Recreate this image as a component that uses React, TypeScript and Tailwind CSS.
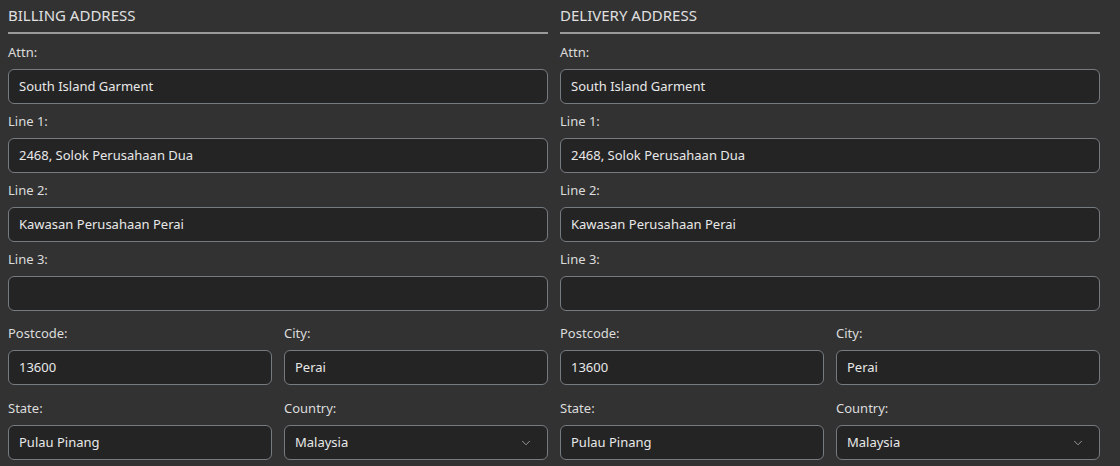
import { ChevronDown } from "lucide-react";

type FieldProps = {
  label: string;
  value?: string;
  select?: boolean;
  className?: string;
};

function Field({ label, value = "", select = false, className = "" }: FieldProps) {
  return (
    <div className={`flex flex-col ${className}`}>
      <label className="h-[19px] mb-[7px] text-[13px] leading-[19px] text-[#dcdcdc]">{label}</label>
      <div className="h-[35px] flex items-center justify-between rounded-[6px] border-[1.5px] border-[#767b81] bg-[#242424] pl-[10px] pr-[14px] text-[13px] text-[#e8e8e8]">
        <span>{value}</span>
        {select && <ChevronDown size={14} strokeWidth={1.5} className="text-[#a8a8a8]" />}
      </div>
    </div>
  );
}

function AddressColumn({ title }: { title: string }) {
  return (
    <section className="flex flex-col">
      {/* heading */}
      <div className="h-[34px] border-b-2 border-[#9a9a9a] pt-[4px] text-[15px] leading-[22px] text-[#e0e0e0]">
        {title}
      </div>

      <Field label="Attn:" value="South Island Garment" className="mt-[9px]" />
      <Field label="Line 1:" value="2468, Solok Perusahaan Dua" className="mt-[8px]" />
      <Field label="Line 2:" value="Kawasan Perusahaan Perai" className="mt-[8px]" />
      <Field label="Line 3:" className="mt-[8px]" />

      <div className="grid grid-cols-2 gap-x-[12px] mt-[13px]">
        <Field label="Postcode:" value="13600" />
        <Field label="City:" value="Perai" />
      </div>
      <div className="grid grid-cols-2 gap-x-[12px] mt-[14px]">
        <Field label="State:" value="Pulau Pinang" />
        <Field label="Country:" value="Malaysia" select />
      </div>
    </section>
  );
}

export default function App() {
  return (
    <div
      className="w-[1120px] h-[466px] overflow-hidden bg-[#323232] pl-[8px] pr-[20px]"
      style={{ fontFamily: '"Noto Sans", "Open Sans", sans-serif' }}
    >
      <div className="grid grid-cols-2 gap-x-[12px]">
        <AddressColumn title="BILLING ADDRESS" />
        <AddressColumn title="DELIVERY ADDRESS" />
      </div>
    </div>
  );
}
